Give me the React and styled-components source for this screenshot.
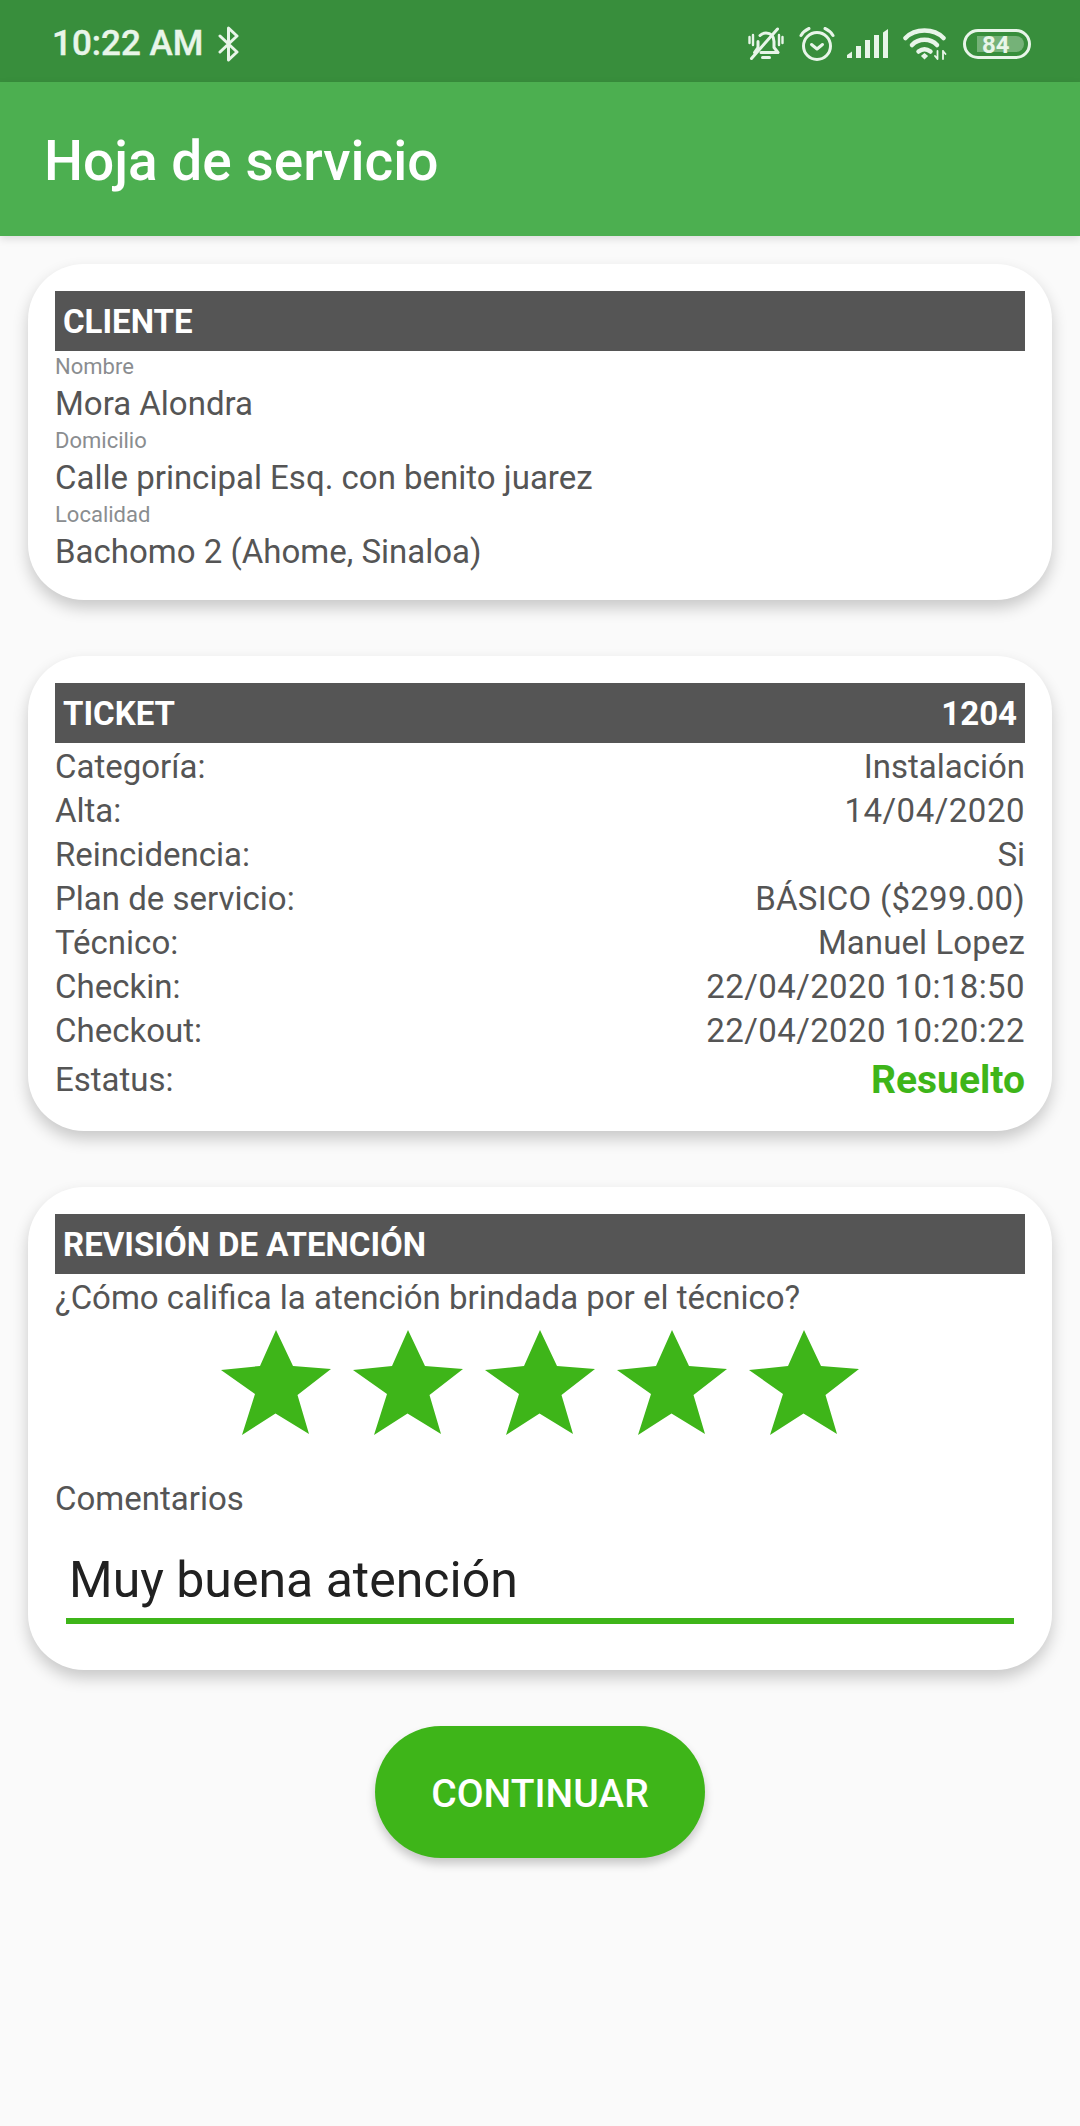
import React from "react";
import styled, {createGlobalStyle} from "styled-components";

const GREEN = '#3eb519';

const GlobalStyle = createGlobalStyle`
  * {
    box-sizing: border-box;
  }
  html, body {
    margin: 0;
    background: #fafafa;
    font-family: Roboto, "Liberation Sans", sans-serif;
  }
`;

const BellOff = () => (
  <svg width="36" height="34" viewBox="0 0 36 34" fill="none" stroke="#e8f5e9" strokeWidth="3" strokeLinecap="round" strokeLinejoin="round">
    <path d="M12 8.500c1.500-1.500 3.500-2.500 6-2.500 5 0 8 3.500 8 8.500v6l4 5H13" />
    <path d="M10 14.500v6l-3.500 5" />
    <path d="M14.500 30.500h7" />
    <path d="M3.500 31.500L29.500 2" />
    <path d="M1.500 10v6M5 8v10M31 8v10M34.500 10v6" strokeWidth="2.400" />
  </svg>
);

const AlarmCheck = () => (
  <svg width="36" height="34" viewBox="0 0 36 34" fill="none" stroke="#e8f5e9" strokeWidth="3" strokeLinecap="round" strokeLinejoin="round">
    <circle cx="18" cy="19" r="13.500" />
    <path d="M12.500 17.500l5.500 4.500 5.500-4.500" />
    <path d="M2 8.500C4 5 6.500 3 10 1.500M34 8.500C32 5 29.500 3 26 1.500" />
  </svg>
);

const Signal = () => (
  <svg width="41" height="30" viewBox="0 0 41 30" fill="#e8f5e9">
    <path d="M0 29v-3l5-3.500V29z" />
    <rect x="9" y="17" width="5" height="12" />
    <rect x="18" y="11" width="5" height="18" />
    <rect x="27" y="6" width="5" height="23" />
    <path d="M36 3.500l5-3.500v29h-5z" />
  </svg>
);

const Wifi = () => (
  <svg width="45" height="33" viewBox="0 0 45 33" fill="none" stroke="#e8f5e9" strokeWidth="4.500" strokeLinecap="round">
    <path d="M2.500 11C12 1 31 1 40.500 11" />
    <path d="M9 18C15.500 11 27.500 11 34 18" />
    <path d="M15.500 24.500c4-3 8-3 12 0" />
    <path d="M19 29l2.500 2.500L24 29l-2.500-2z" fill="#e8f5e9" strokeWidth="1.500" />
    <path d="M34.500 24v8M32 29l2.500 3M40 32v-8M40 24l2.500 3" strokeWidth="1.800" />
  </svg>
);

const Star = () => (
  <svg width="110" height="105" viewBox="0 0 110 105" fill={GREEN}>
    <path d="M55 0L72 36L110 39L76.500 65L88 104L54.500 83.500L21 105L34 64L0 40L39 36Z" />
  </svg>
);

const BluetoothIcon = () => (
  <svg width="22" height="36" viewBox="0 0 22 36" fill="none" stroke="#e8f5e9" strokeWidth="3" strokeLinejoin="round" strokeLinecap="round">
    <path d="M2 10l17 16-8.500 8V2L19 10 2 26" />
  </svg>
);

const Field = ({label, value}) => (
  <>
    <FieldLabel>{label}</FieldLabel>
    <FieldValue>{value}</FieldValue>
  </>
);

const ticketRows = [
  ['Categoría:', 'Instalación', 0],
  ['Alta:', '14/04/2020', 0.5],
  ['Reincidencia:', 'Si', 0],
  ['Plan de servicio:', 'BÁSICO ($299.00)', 0.25],
  ['Técnico:', 'Manuel Lopez', 0.1],
  ['Checkin:', '22/04/2020 10:18:50', 0.4],
  ['Checkout:', '22/04/2020 10:20:22', 0.4],
];

const App = () => {
  return (
    <Screen>
      <GlobalStyle />
      <StatusBar>
        <StatusLeft>
          <Time>10:22 AM</Time>
          <BluetoothIcon />
        </StatusLeft>
        <StatusRight>
          <BellOff />
          <AlarmCheck />
          <Signal />
          <Wifi />
          <Battery><BatteryFill>84</BatteryFill></Battery>
        </StatusRight>
      </StatusBar>
      <AppBar>Hoja de servicio</AppBar>
      <Content>
        <Card>
          <CardHeader><span>CLIENTE</span></CardHeader>
          <Field label="Nombre" value="Mora Alondra" />
          <Field label="Domicilio" value="Calle principal Esq. con benito juarez" />
          <Field label="Localidad" value="Bachomo 2 (Ahome, Sinaloa)" />
        </Card>

        <Card>
          <CardHeader><span>TICKET</span><span>1204</span></CardHeader>
          {ticketRows.map(([name, value, spacing]) => (
            <Row key={name}>
              <span>{name}</span>
              <RowValue $spacing={spacing}>{value}</RowValue>
            </Row>
          ))}
          <StatusRow>
            <span>Estatus:</span>
            <Resolved>Resuelto</Resolved>
          </StatusRow>
        </Card>

        <Card>
          <CardHeader><span>REVISIÓN DE ATENCIÓN</span></CardHeader>
          <Row>¿Cómo califica la atención brindada por el técnico?</Row>
          <Stars>
            {[1, 2, 3, 4, 5].map((n) => <Star key={n} />)}
          </Stars>
          <CommentsLabel>Comentarios</CommentsLabel>
          <CommentInput>Muy buena atención</CommentInput>
        </Card>

        <ContinueButton>CONTINUAR</ContinueButton>
      </Content>
    </Screen>
  )
}

const Screen = styled.div`
  width: 1080px;
  min-height: 2126px;
  background: #fafafa;
`;

const StatusBar = styled.div`
  height: 82px;
  background: #388e3c;
  color: #e8f5e9;
  display: flex;
  align-items: center;
  justify-content: space-between;
  padding: 5px 49px 0 52px;
`;

const StatusLeft = styled.div`
  display: flex;
  align-items: center;
  gap: 15px;
`;

const Time = styled.span`
  font-size: 35px;
  font-weight: 500;
  -webkit-text-stroke: 0.4px #e8f5e9;
`;

const StatusRight = styled.div`
  display: flex;
  align-items: center;
  gap: 15px;

  svg:nth-child(2) {
    margin-right: -3px;
  }
`;

const Battery = styled.div`
  width: 68px;
  height: 30px;
  border: 3px solid #e8f5e9;
  border-radius: 15px;
  padding: 4px 4px 4px 11px;
  display: flex;
`;

const BatteryFill = styled.div`
  flex: 1;
  background: rgba(232, 245, 233, 0.35);
  border-radius: 0 9px 9px 0;
  font-size: 24px;
  line-height: 18px;
  font-weight: 700;
  color: #e8f5e9;
  padding-left: 5px;
`;

const AppBar = styled.div`
  height: 154px;
  padding: 4px 0 0 44px;
  display: flex;
  align-items: center;
  background: #4caf50;
  color: #fff;
  font-size: 55px;
  font-weight: 500;
  box-shadow: 0 3px 8px rgba(0, 0, 0, 0.12);
`;

const Content = styled.div`
  padding: 28px 28px 0;
  display: flex;
  flex-direction: column;
  gap: 56px;
`;

const Card = styled.section`
  background: #fff;
  border-radius: 56px;
  padding: 27px;
  box-shadow: 0 8px 16px rgba(0, 0, 0, 0.2);
`;

const CardHeader = styled.div`
  height: 60px;
  padding: 1px 8px 0;
  background: #555;
  color: #fff;
  font-size: 33px;
  font-weight: 700;
  display: flex;
  align-items: center;
  justify-content: space-between;
`;

const FieldLabel = styled.div`
  height: 29px;
  line-height: 32px;
  font-size: 22px;
  color: #8a8d90;
`;

const FieldValue = styled.div`
  height: 45px;
  line-height: 48px;
  font-size: 33px;
  color: #555;
`;

const Row = styled.div`
  height: 44px;
  line-height: 47px;
  font-size: 33px;
  color: #555;
  display: flex;
  justify-content: space-between;
`;

const RowValue = styled.span`
  letter-spacing: ${({$spacing}) => $spacing}px;
`;

const StatusRow = styled.div`
  height: 53px;
  padding-top: 4px;
  font-size: 33px;
  color: #555;
  display: flex;
  align-items: center;
  justify-content: space-between;
`;

const Resolved = styled.span`
  font-size: 39px;
  font-weight: 700;
  color: ${GREEN};
`;

const Stars = styled.div`
  margin-top: 12px;
  display: flex;
  justify-content: center;
  gap: 22px;
`;

const CommentsLabel = styled.div`
  margin-top: 40px;
  height: 44px;
  line-height: 47px;
  font-size: 33px;
  color: #555;
`;

const CommentInput = styled.div`
  margin: 16px 11px 19px;
  height: 89px;
  padding: 0 3px;
  border-bottom: 6px solid ${GREEN};
  font-size: 50px;
  line-height: 91px;
  color: #212121;
`;

const ContinueButton = styled.button`
  align-self: center;
  width: 330px;
  height: 132px;
  padding-top: 4px;
  border: 0;
  border-radius: 66px;
  background: ${GREEN};
  color: #fff;
  font-family: inherit;
  font-size: 39px;
  font-weight: 500;
  box-shadow: 0 6px 10px rgba(0, 0, 0, 0.2);
`;

export default App;
